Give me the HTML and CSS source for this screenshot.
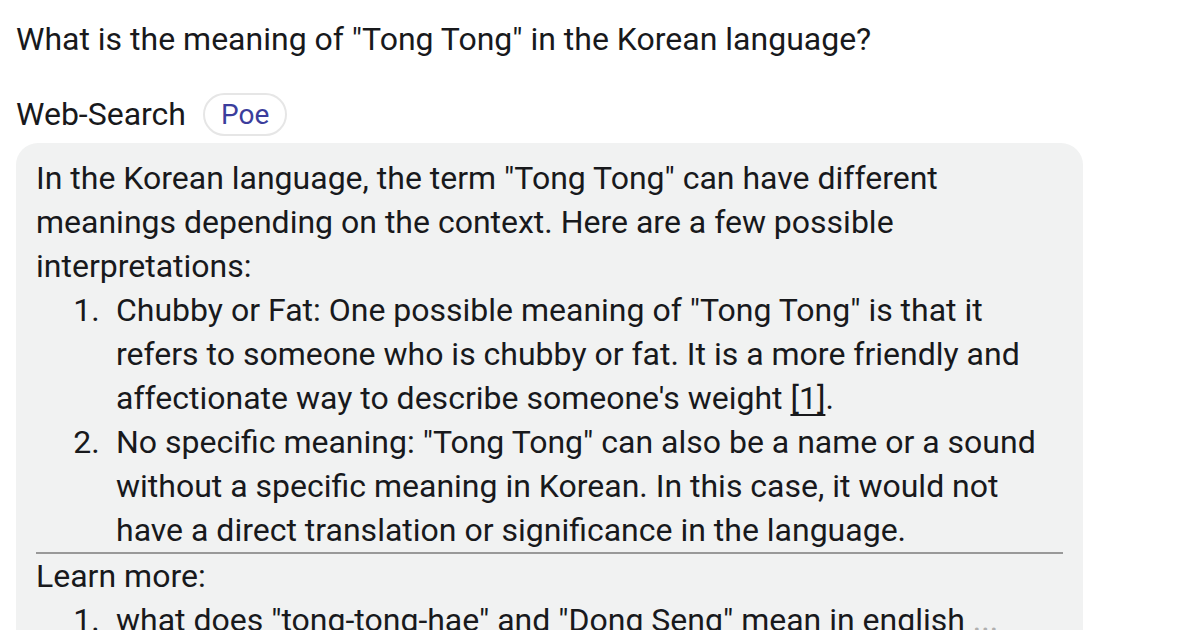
FILE: index.html
```html
<!DOCTYPE html>
<html lang="en">

<head>
    <meta charset="UTF-8">
    <meta name="viewport" content="width=device-width, initial-scale=1.0">
    <title>Web-Search</title>
    <link rel="stylesheet" href="styles.css">
</head>

<body>
    <div class="chat">
        <div class="question">What is the meaning of "Tong Tong" in the Korean language?</div>
        <div class="bot-header">
            <span class="bot-name">Web-Search</span>
            <span class="chip">Poe</span>
        </div>
        <div class="bubble">
            <p>In the Korean language, the term "Tong Tong" can have different meanings depending on the context. Here are a few possible interpretations:</p>
            <ol>
                <li>Chubby or Fat: One possible meaning of "Tong Tong" is that it refers to someone who is chubby or fat. It is a more friendly and affectionate way to describe someone's weight <a class="cite" href="#">[1]</a>.</li>
                <li>No specific meaning: "Tong Tong" can also be a name or a sound without a specific meaning in Korean. In this case, it would not have a direct translation or significance in the language.</li>
            </ol>
            <hr>
            <p>Learn more:</p>
            <ol>
                <li>what does "tong-tong-hae" and "Dong Seng" mean in english <span class="more">...</span></li>
            </ol>
        </div>
    </div>
</body>

</html>
```

FILE: styles.css
```css
body {
    margin: 0;
    padding: 0;
    background: #fff;
    color: #18191c;
    font-family: Roboto, "Noto Sans", sans-serif;
    font-size: 32px;
    line-height: 44px;
}

.chat {
    padding: 0 16px;
    width: 1067px;
}

.question {
    padding: 17px 0 0;
}

.bot-header {
    display: flex;
    align-items: center;
    gap: 17px;
    margin-top: 31px;
}

.chip {
    box-sizing: border-box;
    height: 43px;
    padding: 0 16px;
    border: 2px solid #e6e6e6;
    border-radius: 22px;
    color: #3b3d9c;
    font-size: 28px;
    line-height: 39px;
}

.bubble {
    margin-top: 7px;
    padding: 13px 20px 20px;
    background: #f1f2f2;
    border-radius: 22px;
}

.bubble p {
    margin: 0;
}

.bubble ol {
    margin: 0;
    padding-left: 80px;
}

.bubble li::marker {
    content: counter(list-item) ".\2002";
}

.bubble hr {
    margin: 0;
    height: 0;
    border: none;
    border-top: 2px solid #999;
}

.cite {
    color: inherit;
    text-decoration: underline;
    text-decoration-skip-ink: none;
    text-decoration-thickness: 1.5px;
    text-underline-offset: 5px;
}

.more {
    color: #b0b0b0;
}
```
